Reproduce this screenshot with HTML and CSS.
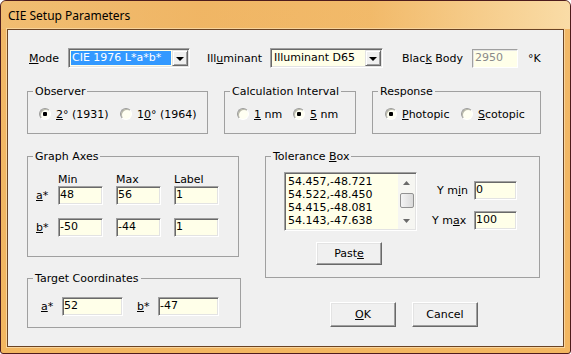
FILE: index.html
```html
<!DOCTYPE html>
<html lang="en">
<head>
    <meta charset="UTF-8">
    <title>CIE Setup Parameters</title>
    <link rel="stylesheet" href="styles.css">
</head>
<body>
    <section class="window">
        <header class="titlebar">CIE Setup Parameters</header>
        <div class="client">

            <div class="top-row">
                <label class="lbl lbl-mode"><u>M</u>ode</label>
                <div class="combo combo-mode">
                    <span class="combo-text selected">CIE 1976 L*a*b*</span>
                    <span class="combo-btn"></span>
                </div>
                <label class="lbl lbl-illum">Ill<u>u</u>minant</label>
                <div class="combo combo-illum">
                    <span class="combo-text">Illuminant D65</span>
                    <span class="combo-btn"></span>
                </div>
                <label class="lbl lbl-bb">Blac<u>k</u> Body</label>
                <div class="edit edit-bb disabled">2950</div>
                <span class="lbl lbl-unit">°K</span>
            </div>

            <div class="group-row">
                <fieldset class="group group-observer">
                    <legend>Observer</legend>
                    <div class="radio-row">
                        <div class="opt opt-obs1"><span class="radio checked"></span><span><u>2</u>° (1931)</span></div>
                        <div class="opt"><span class="radio"></span><span>1<u>0</u>° (1964)</span></div>
                    </div>
                </fieldset>
                <fieldset class="group group-calc">
                    <legend>Calculation Interval</legend>
                    <div class="radio-row">
                        <div class="opt opt-calc1"><span class="radio"></span><span><u>1</u> nm</span></div>
                        <div class="opt"><span class="radio checked"></span><span><u>5</u> nm</span></div>
                    </div>
                </fieldset>
                <fieldset class="group group-resp">
                    <legend>Response</legend>
                    <div class="radio-row">
                        <div class="opt opt-resp1"><span class="radio checked"></span><span><u>P</u>hotopic</span></div>
                        <div class="opt"><span class="radio"></span><span><u>S</u>cotopic</span></div>
                    </div>
                </fieldset>
            </div>

            <div class="main-row">
                <div class="left-col">
                    <fieldset class="group group-axes">
                        <legend>Graph Axes</legend>
                        <div class="axes">
                            <div class="axes-row axes-head"><span></span><span>Min</span><span>Max</span><span>Label</span></div>
                            <div class="axes-row">
                                <label><u>a</u>*</label>
                                <div class="edit edit-axis">48</div>
                                <div class="edit edit-axis">56</div>
                                <div class="edit edit-axis">1</div>
                            </div>
                            <div class="axes-row axes-row-b">
                                <label><u>b</u>*</label>
                                <div class="edit edit-axis">-50</div>
                                <div class="edit edit-axis">-44</div>
                                <div class="edit edit-axis">1</div>
                            </div>
                        </div>
                    </fieldset>

                    <fieldset class="group group-target">
                        <legend>Target Coordinates</legend>
                        <div class="target-row">
                            <label class="t-lbl"><u>a</u>*</label>
                            <div class="edit edit-target">52</div>
                            <label class="t-lbl t-lbl-b"><u>b</u>*</label>
                            <div class="edit edit-target">-47</div>
                        </div>
                    </fieldset>
                </div>

                <div class="right-col">
                    <fieldset class="group group-tol">
                        <legend>Tolerance <u>B</u>ox</legend>
                        <div class="tol">
                            <div class="tol-left">
                                <div class="listbox">
                                    <div class="list-items">
                                        <div>54.457,-48.721</div>
                                        <div>54.522,-48.450</div>
                                        <div>54.415,-48.081</div>
                                        <div>54.143,-47.638</div>
                                    </div>
                                    <div class="vscroll">
                                        <span class="sb-btn">
                                            <svg width="7" height="4" viewBox="0 0 7 4"><path d="M3.5 0 L7 4 L0 4 Z" fill="#6a6a6a"/></svg>
                                        </span>
                                        <span class="sb-thumb"></span>
                                        <span class="sb-track"></span>
                                        <span class="sb-btn">
                                            <svg width="7" height="4" viewBox="0 0 7 4"><path d="M0 0 L7 0 L3.5 4 Z" fill="#6a6a6a"/></svg>
                                        </span>
                                    </div>
                                </div>
                                <button class="btn btn-paste">Past<u>e</u></button>
                            </div>
                            <div class="tol-right">
                                <div class="y-row">
                                    <label class="y-lbl y-min">Y m<u>i</u>n</label>
                                    <div class="edit edit-y">0</div>
                                </div>
                                <div class="y-row y-row-max">
                                    <label class="y-lbl y-max">Y m<u>a</u>x</label>
                                    <div class="edit edit-y">100</div>
                                </div>
                            </div>
                        </div>
                    </fieldset>

                    <div class="buttons">
                        <button class="btn btn-dlg"><u>O</u>K</button>
                        <button class="btn btn-dlg">Cancel</button>
                    </div>
                </div>
            </div>

        </div>
    </section>
</body>
</html>
```

FILE: styles.css
```css
body {
    margin: 0;
    background: #ffffff;
    font-family: "DejaVu Sans", sans-serif;
    font-size: 11px;
    color: #000000;
}

u {
    text-decoration: underline;
    text-underline-offset: 1px;
}

/* window frame */

.window {
    width: 571px;
    height: 354px;
    box-sizing: border-box;
    display: flex;
    flex-direction: column;
    border: 1px solid #4e1c1c;
    border-radius: 6px 6px 3px 3px;
    background: linear-gradient(180deg, #f1b868 0%, #f2b660 100%);
    overflow: hidden;
}

.titlebar {
    height: 28px;
    flex: none;
    padding: 1px 0 0 7px;
    box-sizing: border-box;
    line-height: 27px;
    font-family: "Noto Sans", sans-serif;
    font-size: 12px;
    color: #000000;
    background: linear-gradient(90deg, rgba(240, 192, 120, 0.6) 0%, rgba(236, 172, 88, 0.2) 35%, rgba(243, 190, 110, 0.3) 65%, rgba(250, 222, 170, 0.95) 100%);
}

.client {
    flex: 1;
    margin: 0 6px 6px 6px;
    border: 1px solid #6b4424;
    box-shadow: 0 0 0 1px #f8d49c;
    background: #f0f0f0;
    padding: 18px 0 0 19px;
    box-sizing: border-box;
}

/* common controls */

.lbl {
    line-height: 13px;
}

.edit {
    box-sizing: border-box;
    height: 19px;
    padding: 0 0 0 1px;
    line-height: 15px;
    background: #ffffe9;
    border: 1px solid;
    border-color: #a0a0a0 #ffffff #ffffff #a0a0a0;
    box-shadow: inset 1px 1px 0 #696969, inset -1px -1px 0 #e3e3e3;
    white-space: nowrap;
}

.edit.disabled {
    color: #8a8a8a;
    box-shadow: inset 1px 1px 0 #e3e3e3;
}

.btn {
    box-sizing: border-box;
    padding: 0;
    font-family: "DejaVu Sans", sans-serif;
    font-size: 11px;
    color: #000000;
    background: #f0f0f0;
    border: 1px solid;
    border-color: #ffffff #696969 #696969 #ffffff;
    box-shadow: inset -1px -1px 0 #a0a0a0, inset 1px 1px 0 #e3e3e3;
}

.radio {
    width: 12px;
    height: 12px;
    box-sizing: border-box;
    flex: none;
    border-radius: 50%;
    border: 1px solid;
    border-color: #9a9a9a #ffffff #ffffff #9a9a9a;
    background: #fffff2;
    box-shadow: inset 1px 1px 0 #b8b8a8;
    display: flex;
    align-items: center;
    justify-content: center;
}

.radio.checked::after {
    content: "";
    width: 4px;
    height: 4px;
    border-radius: 1px;
    background: #000000;
}

.group {
    margin: 0;
    padding: 0;
    min-width: 0;
    border: 1px solid #a0a0a0;
    box-sizing: border-box;
}

.group legend {
    margin-left: 5px;
    padding: 0 2px;
    line-height: 13px;
}

/* top row */

.top-row {
    display: flex;
    align-items: center;
    height: 20px;
}

.lbl-mode {
    margin-left: 2px;
    width: 39px;
}

.combo {
    box-sizing: border-box;
    height: 20px;
    display: flex;
    align-items: center;
    padding: 2px;
    background: #ffffe9;
    border: 1px solid;
    border-color: #a0a0a0 #ffffff #ffffff #a0a0a0;
    box-shadow: inset 1px 1px 0 #696969, inset -1px -1px 0 #e3e3e3;
}

.combo-mode {
    width: 122px;
}

.combo-illum {
    width: 113px;
}

.combo-text {
    flex: 1;
    height: 14px;
    line-height: 14px;
    padding-left: 1px;
    white-space: nowrap;
    overflow: hidden;
}

.combo-text.selected {
    background: #3399ff;
    color: #ffffff;
    margin-right: 1px;
}

.combo-btn {
    width: 16px;
    height: 16px;
    box-sizing: border-box;
    flex: none;
    margin: -1px -1px -1px 0;
    background: #f0f0f0;
    border: 1px solid;
    border-color: #e3e3e3 #696969 #696969 #e3e3e3;
    box-shadow: inset 1px 1px 0 #ffffff, inset -1px -1px 0 #a0a0a0;
    display: flex;
    align-items: center;
    justify-content: center;
}

.combo-btn::after {
    content: "";
    width: 0;
    height: 0;
    border-left: 4px solid transparent;
    border-right: 4px solid transparent;
    border-top: 4px solid #000000;
    margin-top: 1px;
}

.lbl-illum {
    margin-left: 17px;
    width: 63px;
}

.lbl-bb {
    margin-left: 19px;
    width: 70px;
}

.edit-bb {
    width: 46px;
    padding-left: 2px;
}

.lbl-unit {
    margin-left: 10px;
}

/* option groups */

.group-row {
    display: flex;
    gap: 16px;
    margin-top: 17px;
}

.group-observer {
    width: 181px;
}

.group-calc {
    width: 132px;
}

.group-resp {
    width: 169px;
}

.radio-row {
    display: flex;
    align-items: center;
    height: 14px;
    padding: 9px 0 12px 12px;
}

.group-observer .radio-row {
    padding-left: 11px;
}

.opt {
    display: flex;
    align-items: center;
    gap: 5px;
    line-height: 13px;
    white-space: nowrap;
}

.opt-obs1 {
    width: 81px;
}

.opt-calc1 {
    width: 56px;
}

.opt-resp1 {
    width: 76px;
}

/* lower part */

.main-row {
    display: flex;
    margin-top: 16px;
}

.left-col {
    width: 214px;
    margin-right: 24px;
}

.group-axes {
    width: 212px;
}

.axes {
    padding: 10px 0 19px 8px;
}

.axes-row {
    display: grid;
    grid-template-columns: 22px 58px 58px 45px;
    align-items: center;
    height: 19px;
}

.axes-head {
    height: 13px;
    line-height: 13px;
}

.axes-row-b {
    margin-top: 13px;
}

.edit-axis {
    width: 45px;
}

.group-target {
    width: 214px;
    margin-top: 15px;
}

.target-row {
    display: flex;
    align-items: center;
    height: 19px;
    padding: 12px 0 11px 13px;
}

.t-lbl {
    width: 21px;
}

.t-lbl-b {
    margin-left: 14px;
}

.edit-target {
    width: 61px;
}

.right-col {
    width: 275px;
}

.group-tol {
    width: 275px;
}

.tol {
    display: flex;
    padding: 9px 0 12px 18px;
}

.tol-left {
    width: 133px;
    display: flex;
    flex-direction: column;
}

.listbox {
    box-sizing: border-box;
    width: 133px;
    height: 59px;
    display: flex;
    background: #ffffe9;
    border: 1px solid;
    border-color: #a0a0a0 #ffffff #ffffff #a0a0a0;
    box-shadow: inset 1px 1px 0 #696969, inset -1px -1px 0 #e3e3e3;
    padding: 1px;
}

.list-items {
    flex: 1;
    padding: 1px 0 0 2px;
    line-height: 13px;
    overflow: hidden;
    white-space: nowrap;
}

.vscroll {
    width: 17px;
    display: flex;
    flex-direction: column;
    align-items: center;
    background: #f6f6f2;
}

.sb-btn {
    height: 17px;
    width: 17px;
    display: flex;
    align-items: center;
    justify-content: center;
}

.sb-thumb {
    width: 14px;
    height: 15px;
    box-sizing: border-box;
    margin-top: 2px;
    border: 1px solid #929292;
    border-radius: 2px;
    background: linear-gradient(90deg, #f4f4f4, #dadada);
}

.sb-track {
    flex: 1;
}

.btn-paste {
    width: 66px;
    height: 23px;
    margin: 11px 0 0 32px;
}

.tol-right {
    display: flex;
    flex-direction: column;
    gap: 11px;
    margin-top: 9px;
}

.y-row {
    display: flex;
    align-items: center;
    height: 19px;
}

.y-lbl {
    line-height: 13px;
}

.y-min {
    margin-left: 20px;
    width: 37px;
}

.y-max {
    margin-left: 15px;
    width: 42px;
}

.edit-y {
    width: 43px;
}

.buttons {
    display: flex;
    gap: 16px;
    margin: 24px 0 0 65px;
}

.btn-dlg {
    width: 66px;
    height: 25px;
}
```
